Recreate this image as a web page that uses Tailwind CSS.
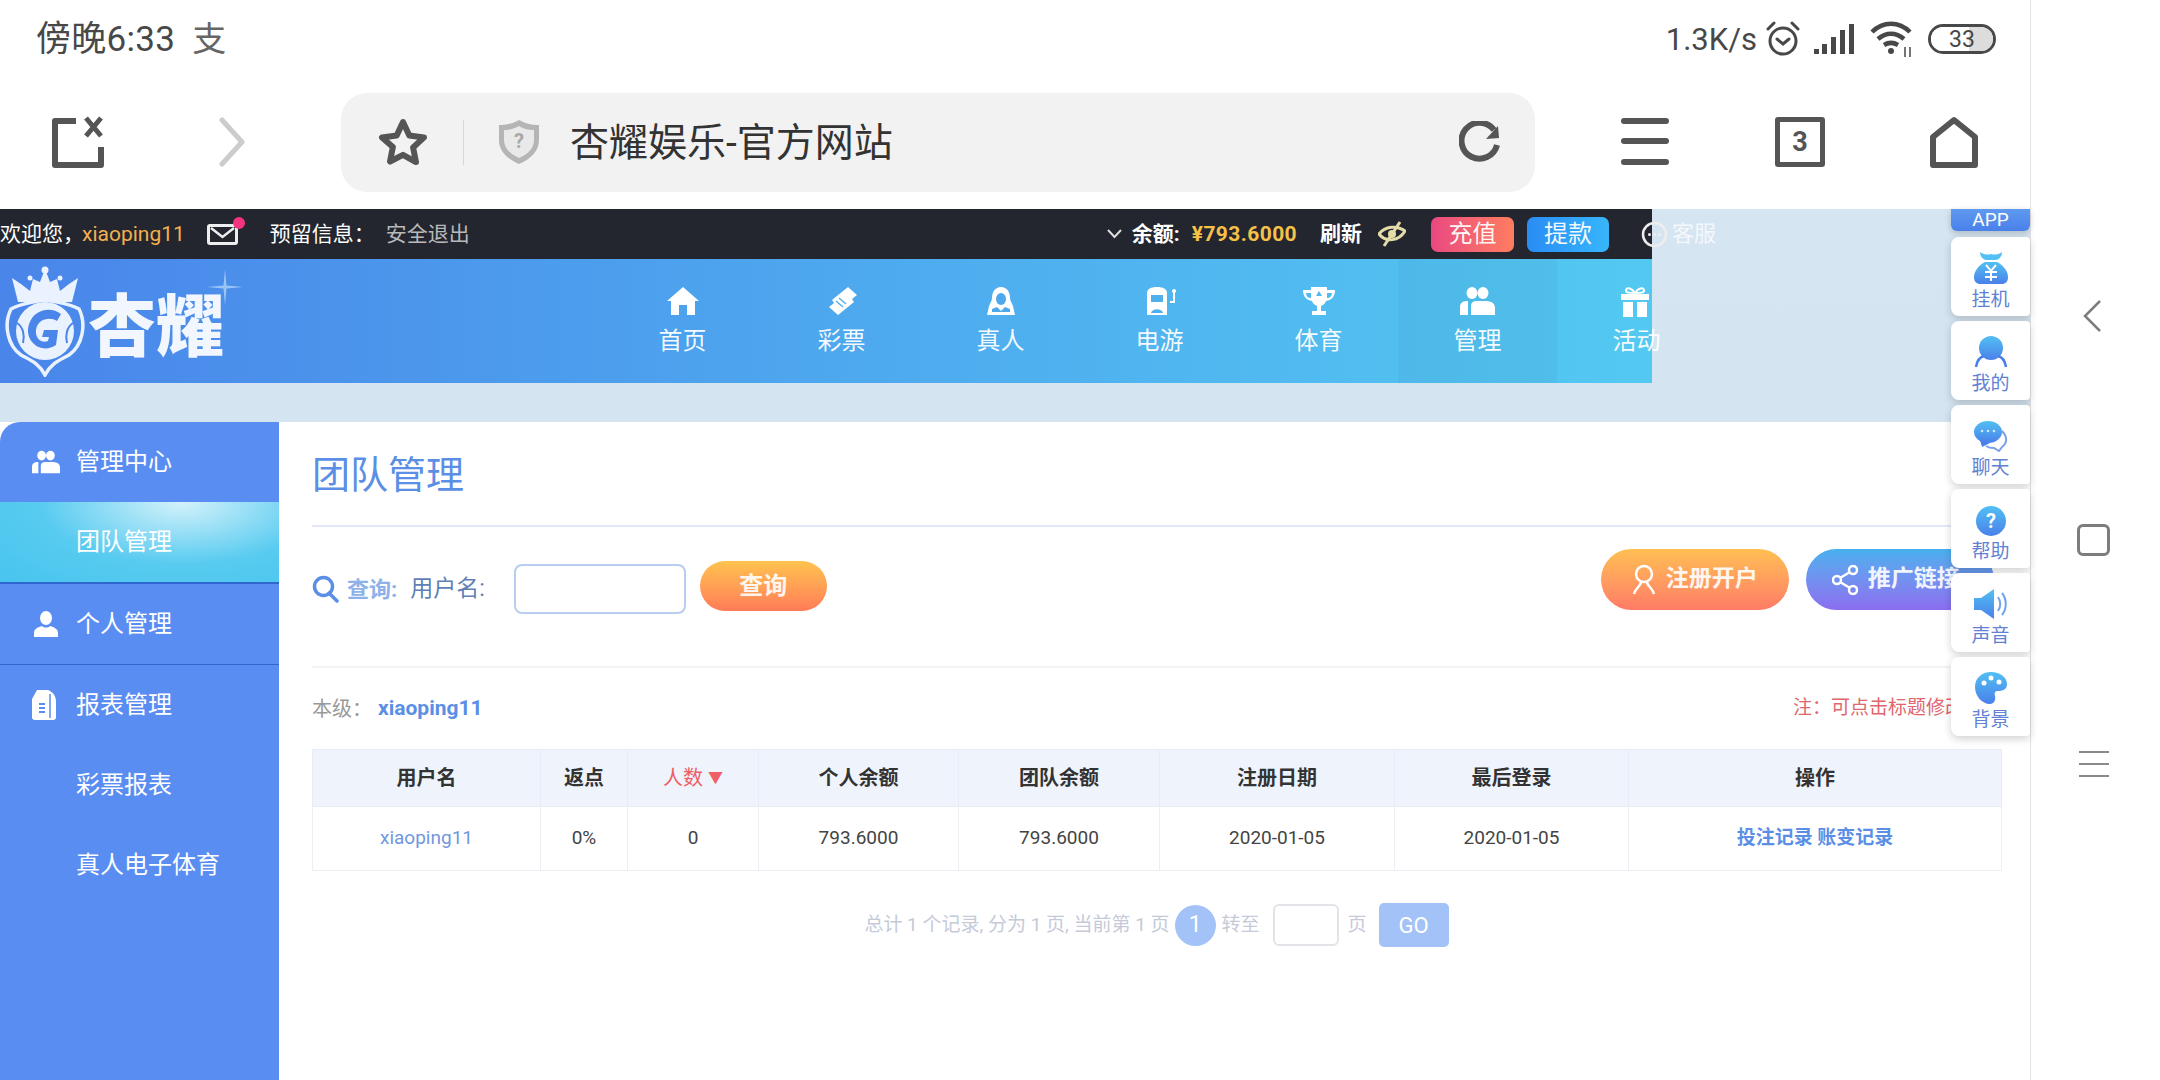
<!DOCTYPE html>
<html lang="zh-CN">
<head>
  <meta charset="utf-8" />
  <title>杏耀娱乐-官方网站</title>
  <script src="https://cdn.jsdelivr.net/npm/@tailwindcss/browser@4"></script>
</head>
<body class="bg-white">
<svg width="0" height="0" class="absolute">
  <defs>
    <linearGradient id="floatBlue" x1="0" y1="0" x2="0" y2="1">
      <stop offset="0" stop-color="#52c0f2" />
      <stop offset="1" stop-color="#4a80ea" />
    </linearGradient>
  </defs>
</svg>

<div class="w-[2160px] h-[1080px] overflow-hidden flex font-['Roboto','Noto_Sans_CJK_SC',sans-serif]">

  <!-- phone screen -->
  <div class="w-[2031px] shrink-0 flex flex-col border-r border-[#e3e3e6]">

    <!-- status bar -->
    <div class="h-[75px] pt-[3px] flex items-center pl-[36px] pr-[34px] text-[#484848]">
      <span class="text-[35px] leading-none tracking-[0.3px]">傍晚6:33</span>
      <span class="ml-[17px] text-[34px] leading-none text-[#666]">支</span>
      <span class="ml-auto text-[31px] leading-none">1.3K/s</span>
      <!-- alarm -->
      <svg class="ml-[9px]" width="34" height="36" viewBox="0 0 34 36" fill="none" stroke="#484848" stroke-width="3">
        <circle cx="17" cy="20" r="13" />
        <path d="M11 18l6 5 6-5M2 8l6-6M32 8l-6-6" stroke-linecap="round" />
      </svg>
      <!-- signal -->
      <svg class="ml-[14px]" width="40" height="32" viewBox="0 0 40 32" fill="#484848">
        <rect x="0" y="26" width="5" height="5" /><rect x="8" y="21" width="5" height="10" /><rect x="17" y="14" width="5" height="17" /><rect x="26" y="7" width="5" height="24" /><rect x="35" y="1" width="5" height="30" />
      </svg>
      <!-- wifi -->
      <svg class="ml-[16px]" width="44" height="38" viewBox="0 0 44 38" fill="none" stroke="#484848" stroke-width="4.5">
        <path d="M2 12C13 1 29 1 40 12M8 19c8-7 18-7 26 0M14 25c5-3 9-3 14 0" />
        <circle cx="21" cy="31" r="3" fill="#484848" stroke="none" />
        <path d="M35 27v10M40 27v10" stroke-width="1.5" />
      </svg>
      <!-- battery -->
      <div class="ml-[14px] w-[68px] h-[30px] rounded-full border-[3px] border-[#484848] relative flex items-center justify-center overflow-hidden">
        <div class="absolute inset-y-0 left-0 w-[62%] bg-white"></div>
        <div class="absolute inset-y-0 right-0 w-[38%] bg-[#dcdcdc]"></div>
        <span class="relative text-[23px] leading-none text-[#484848]">33</span>
      </div>
    </div>

    <!-- browser toolbar -->
    <div class="h-[134px] flex items-center pl-[52px]">
      <svg class="shrink-0" width="54" height="52" viewBox="0 0 54 52" fill="none" stroke="#555" stroke-width="6" stroke-linejoin="round">
        <path d="M24 5H3v44h46V31" />
        <path d="M34 2l15 18M49 2L34 20" stroke-width="5" />
      </svg>
      <svg class="shrink-0 ml-[112px]" width="28" height="50" viewBox="0 0 28 50" fill="none" stroke="#ccc" stroke-width="5" stroke-linecap="round" stroke-linejoin="round">
        <path d="M4 3l20 22L4 47" />
      </svg>

      <div class="ml-[95px] w-[1194px] h-[99px] shrink-0 rounded-[26px] bg-[#f2f2f2] flex items-center pl-[37px] pr-[34px]">
        <svg class="shrink-0" width="50" height="48" viewBox="0 0 50 48" fill="none" stroke="#555" stroke-width="6" stroke-linejoin="round">
          <path d="M25 4l6.3 13.6 14.7 1.8-10.9 10.1 2.9 14.6L25 36.8 12 43.500l2.900-14.600L4 19.400l14.700-1.800z" />
        </svg>
        <div class="ml-[35px] w-[1px] h-[45px] bg-[#d6d6d6] shrink-0"></div>
        <svg class="ml-[34px] shrink-0" width="42" height="46" viewBox="0 0 42 46">
          <path d="M21 1c7 4 13 5 20 5v15c0 11-8 19-20 24C9 40 1 32 1 21V6c7 0 13-1 20-5z" fill="#b5b5b5" />
          <path d="M21 7c5 3 10 4 15 4v10c0 8-6 14-15 18C12 35 6 29 6 21V11c5 0 10-1 15-4z" fill="#e9e9e9" />
          <text x="21" y="29" text-anchor="middle" font-size="20" font-weight="700" fill="#a8a8a8">?</text>
        </svg>
        <span class="ml-[30px] pt-[2px] text-[39px] leading-none text-[#333]">杏耀娱乐-官方网站</span>
        <svg class="ml-auto shrink-0" width="42" height="42" viewBox="0 0 42 42" fill="none" stroke="#555" stroke-width="6">
          <path d="M35 9A18 18 0 1 0 38 24" />
          <path d="M27 18l13-1-1-12z" fill="#555" stroke="none" />
        </svg>
      </div>

      <svg class="ml-[86px] shrink-0" width="48" height="48" viewBox="0 0 48 48" fill="#555">
        <rect x="0" y="0" width="48" height="6" rx="3" /><rect x="0" y="20" width="48" height="6" rx="3" /><rect x="0" y="41" width="48" height="6" rx="3" />
      </svg>
      <div class="ml-[106px] w-[50px] h-[50px] shrink-0 border-[5px] border-[#555] rounded-[3px] flex items-center justify-center text-[27px] font-bold leading-none text-[#555]">3</div>
      <svg class="ml-[105px] shrink-0" width="48" height="52" viewBox="0 0 48 52" fill="none" stroke="#555" stroke-width="6" stroke-linejoin="round">
        <path d="M24 4L45 21v28H3V21z" />
      </svg>
    </div>

    <!-- website -->
    <div class="relative flex-1 flex flex-col bg-linear-to-b from-[#d6e5f2] to-[#d2e1ee]">

      <!-- top info bar -->
      <div class="w-[1652px] h-[50px] shrink-0 bg-[#23262f] flex items-center text-[21px] leading-none text-white whitespace-nowrap">
        <span class="shrink-0">欢迎您&#65292;</span>
        <span class="shrink-0 -ml-[2px] text-[#f2b04e]">xiaoping11</span>
        <div class="relative shrink-0 ml-[22px] w-[31px] h-[21px] border-[3px] border-[#eee] rounded-[3px]">
          <svg class="absolute left-0 top-0" width="25" height="15" viewBox="0 0 25 15" fill="none" stroke="#eee" stroke-width="2.500"><path d="M1 1l11.500 9L24 1" /></svg>
          <div class="absolute -right-[10px] -top-[10px] w-[12px] h-[12px] rounded-full bg-[#f5347f]"></div>
        </div>
        <span class="shrink-0 ml-[32px]">预留信息&#65306;</span>
        <span class="shrink-0 ml-[11px] text-[#b9b9b9]">安全退出</span>

        <svg class="shrink-0 ml-[637px]" width="15" height="10" viewBox="0 0 15 10" fill="none" stroke="#ddd" stroke-width="2"><path d="M1 1l6.500 7L14 1" /></svg>
        <span class="shrink-0 ml-[10px] font-bold">余额:</span>
        <span class="shrink-0 ml-[12px] font-bold text-[#f6c146] tracking-[0.4px]">¥793.6000</span>
        <span class="shrink-0 ml-[23px] font-bold">刷新</span>
        <svg class="shrink-0 ml-[16px]" width="28" height="26" viewBox="0 0 28 26" fill="none" stroke="#e4dca8" stroke-width="3">
          <path d="M1 13C7 5 19 4 27 10 21 20 8 22 1 13z" />
          <circle cx="14" cy="13" r="4" fill="#e4dca8" stroke="none" />
          <path d="M22 1L6 25" />
        </svg>
        <div class="shrink-0 ml-[25px] w-[83px] h-[35px] rounded-[7px] bg-linear-to-r from-[#e9487f] to-[#ff7c5e] flex items-center justify-center text-[24px] text-white/95">充值</div>
        <div class="shrink-0 ml-[13px] w-[82px] h-[35px] rounded-[7px] bg-linear-to-r from-[#2a8cf4] to-[#38b6fb] flex items-center justify-center text-[24px] text-white/95">提款</div>
        <svg class="ml-[32px] shrink-0" width="27" height="27" viewBox="0 0 27 27" fill="none" stroke="#eee" stroke-width="2.500">
          <circle cx="13.500" cy="13.500" r="11.500" />
          <circle cx="8.500" cy="13.500" r="1.500" fill="#eee" stroke="none" /><circle cx="13.500" cy="13.500" r="1.500" fill="#eee" stroke="none" /><circle cx="18.500" cy="13.500" r="1.500" fill="#eee" stroke="none" />
        </svg>
        <span class="ml-[4px] shrink-0 text-[22px] text-white/75">客服</span>
      </div>

      <!-- logo + main nav -->
      <div class="w-[1652px] h-[124px] shrink-0 flex bg-linear-to-r from-[#4a85ea] to-[#53c9f1]">
        <div class="w-[603px] shrink-0 relative flex items-center">
          <svg class="ml-[3px] shrink-0" width="84" height="112" viewBox="0 0 84 112">
            <!-- crown -->
            <path d="M42 4l5 13 7-3 3 12 9-7 9-6-6 24H15L9 13l9 6 9 7 3-12 7 3z" fill="#eaf2ff" />
            <circle cx="42" cy="5" r="3.500" fill="#eaf2ff" /><circle cx="27" cy="13" r="2.500" fill="#eaf2ff" /><circle cx="57" cy="13" r="2.500" fill="#eaf2ff" />
            <!-- shield -->
            <path d="M42 34c12 4 24 4 34 10 8 16 3 37-10 46-9 5-18 8-24 20-6-12-15-15-24-20C5 81 0 60 8 44c10-6 22-6 34-10z" fill="none" stroke="#eaf2ff" stroke-width="3.500" />
            <circle cx="42" cy="66" r="29" fill="#eaf2ff" />
            <path d="M58 49c-11-9-31-4-33 15-1 15 15 25 28 16l2-15H41l-2 7h7l-1 4c-7 3-13-3-12-11 1-11 14-14 21-9z" fill="#4a85ea" />
            <path d="M14 58c6 4 8 12 6 20M70 58c-6 4-8 12-6 20" fill="none" stroke="#4a85ea" stroke-width="2" />
          </svg>
          <span class="ml-[1px] mt-[14px] text-[68px] leading-none font-black text-[#f1f6ff]">杏耀</span>
          <svg class="absolute left-[207px] top-[10px]" width="36" height="36" viewBox="0 0 36 36" fill="#dff0ff">
            <path d="M18 0l1.500 16.500L36 18l-16.500 1.500L18 36l-1.500-16.500L0 18l16.500-1.500z" opacity=".55" />
          </svg>
        </div>

        <div class="w-[159px] shrink-0 flex flex-col items-center pt-[28px]">
          <svg width="32" height="28" viewBox="0 0 32 28" fill="#fff"><path d="M16 0L32 14h-4v14h-8V18h-8v10H4V14H0z" /></svg>
          <span class="mt-[12px] text-[24px] leading-[28px] text-white/95">首页</span>
        </div>
        <div class="w-[159px] shrink-0 flex flex-col items-center pt-[28px]">
          <svg width="32" height="28" viewBox="0 0 32 28" fill="#fff"><path d="M22 0l9 8-5 4 2 3-16 13-9-8 5-4-2-3z" /><path d="M13 11l7 6M10 14l7 6" stroke="#5aaeea" stroke-width="1.500" /></svg>
          <span class="mt-[12px] text-[24px] leading-[28px] text-white/95">彩票</span>
        </div>
        <div class="w-[159px] shrink-0 flex flex-col items-center pt-[28px]">
          <svg width="28" height="28" viewBox="0 0 28 28" fill="#fff"><path d="M14 0c6 0 9 5 9 11 0 3 2 5 3 8l2 9H0l2-9c1-3 3-5 3-8 0-6 3-11 9-11z" /><ellipse cx="14" cy="12" rx="5" ry="6" fill="#4ea8ec" /><path d="M5 22l5-2 4 4 4-4 5 2v3H5z" fill="#4ea8ec" /></svg>
          <span class="mt-[12px] text-[24px] leading-[28px] text-white/95">真人</span>
        </div>
        <div class="w-[159px] shrink-0 flex flex-col items-center pt-[28px]">
          <svg width="32" height="28" viewBox="0 0 32 28" fill="#fff"><path d="M3 6c0-4 4-6 10-6s10 2 10 6v22H3z" /><rect x="7" y="8" width="12" height="7" fill="#4fb0ec" /><path d="M7 26c1-5 11-5 12 0z" fill="#4fb0ec" /><circle cx="30" cy="4" r="2" /><path d="M29 5h2v11h-5v-2h3z" /></svg>
          <span class="mt-[12px] text-[24px] leading-[28px] text-white/95">电游</span>
        </div>
        <div class="w-[159px] shrink-0 flex flex-col items-center pt-[28px]">
          <svg width="32" height="28" viewBox="0 0 32 28" fill="#fff"><path d="M8 0h16v3h8c0 6-3 10-9 11-1 3-3 4-5 5v5h5v4H9v-4h5v-5c-2-1-4-2-5-5C3 13 0 9 0 3h8zM3 6c0 3 2 5 5 5V6zm26 0h-5v5c3 0 5-2 5-5z" /><path d="M16 4l3 5h-6z" fill="#50b8ec" /></svg>
          <span class="mt-[12px] text-[24px] leading-[28px] text-white/95">体育</span>
        </div>
        <div class="w-[159px] shrink-0 flex flex-col items-center pt-[28px] bg-black/3">
          <svg width="35" height="28" viewBox="0 0 35 28" fill="#fff"><ellipse cx="12" cy="6" rx="5.500" ry="6" /><ellipse cx="23" cy="6" rx="5.500" ry="6" /><path d="M0 28v-8c0-4 3-6 7-6h1v14zM11 28V19c0-4 3-5 6-5h7c6 0 11 1 11 7v7z" /></svg>
          <span class="mt-[12px] text-[24px] leading-[28px] text-white/95">管理</span>
        </div>
        <div class="w-[159px] shrink-0 flex flex-col items-center pt-[28px]">
          <svg class="-translate-x-[2px]" width="32" height="30" viewBox="0 0 32 30" fill="#fff"><path d="M2 13V7h28v6zM4 15h10v15H4zM18 15h10v15H18z" /><path d="M16 6c-3-5-8-6-9-3s5 3 9 3c4 0 10 0 9-3s-6-2-9 3z" fill="none" stroke="#fff" stroke-width="2" /></svg>
          <span class="mt-[10px] text-[24px] leading-[28px] text-white/95">活动</span>
        </div>
      </div>

      <div class="h-[39px] shrink-0"></div>

      <!-- sidebar + content -->
      <div class="flex-1 flex bg-white min-h-0">
        <div class="w-[279px] shrink-0 bg-[#5a8df2] rounded-tl-[20px] text-white text-[24px]">
          <div class="h-[80px] flex items-center pl-[32px]">
            <svg class="w-[28px] shrink-0" width="28" height="24" viewBox="0 0 35 28" fill="#fff"><ellipse cx="12" cy="6" rx="5.500" ry="6" /><ellipse cx="23" cy="6" rx="5.500" ry="6" /><path d="M0 28v-8c0-4 3-6 7-6h1v14zM11 28V19c0-4 3-5 6-5h7c6 0 11 1 11 7v7z" /></svg>
            <span class="ml-[16px]">管理中心</span>
          </div>
          <div class="h-[80px] pl-[76px] flex items-center bg-[radial-gradient(ellipse_at_65%_0%,#d4f2fb,#58cbf0_55%,#47c4ee)]">团队管理</div>
          <div class="h-[2px] bg-[#2f66cf]"></div>
          <div class="h-[80px] flex items-center pl-[32px]">
            <svg class="shrink-0" width="28" height="26" viewBox="0 0 28 26" fill="#fff"><ellipse cx="14" cy="7" rx="6" ry="7" /><path d="M2 26v-4c0-4 4-6 8-7 2 2 6 2 8 0 4 1 8 3 8 7v4z" /></svg>
            <span class="ml-[16px]">个人管理</span>
          </div>
          <div class="h-[1px] bg-[#2f66cf]"></div>
          <div class="h-[80px] flex items-center pl-[32px]">
            <svg class="shrink-0" width="24" height="30" viewBox="0 0 24 30" fill="#fff"><path d="M5 0h11c5 2 8 6 8 12v15c0 2-1 3-3 3H3c-2 0-3-1-3-3V9z" /><path d="M7 14h6M7 18h6M7 22h6" stroke="#5a8df2" stroke-width="2" /><path d="M18 4v24" stroke="#5a8df2" stroke-width="1.500" /></svg>
            <span class="ml-[20px]">报表管理</span>
          </div>
          <div class="h-[80px] flex items-center pl-[76px]">彩票报表</div>
          <div class="h-[80px] flex items-center pl-[76px]">真人电子体育</div>
        </div>

        <!-- content -->
        <div class="w-[1722px] shrink-0 pl-[33px]">
          <div class="h-[105px] border-b-2 border-[#e3e8f6] flex items-center pt-[3px]">
            <h1 class="text-[38px] leading-none font-normal text-[#5b8fe6]">团队管理</h1>
          </div>

          <div class="h-[141px] border-b-2 border-[#f2f3f7] flex items-start">
            <div class="flex items-center mt-[37px] h-[50px]">
              <svg class="shrink-0" width="27" height="28" viewBox="0 0 27 28" fill="none" stroke="#5b8fe6" stroke-width="3.500"><circle cx="11.500" cy="11.500" r="9" /><path d="M17 18l8 8" stroke-linecap="round" /></svg>
              <span class="ml-[8px] text-[22px] font-bold text-[#8fb1ea]">查询:</span>
              <span class="ml-[13px] text-[23px] text-[#5f7fb5]">用户名:</span>
              <input class="ml-[29px] w-[172px] h-[50px] rounded-[8px] border-2 border-[#b8cdef] bg-white" />
            </div>
            <div class="ml-[14px] mt-[34px] w-[127px] h-[50px] rounded-full bg-linear-to-b from-[#ffc34e] to-[#ff7b58] flex items-center justify-center text-[24px] font-bold text-white/90">查询</div>
            <div class="ml-[774px] mt-[22px] w-[188px] h-[61px] rounded-full bg-linear-to-b from-[#ffbf52] to-[#ff7b66] flex items-center justify-center text-[23px] font-bold text-white/90">
              <svg class="mr-[10px]" width="24" height="32" viewBox="0 0 24 32" fill="none" stroke="#fff" stroke-width="2.500"><circle cx="12" cy="10" r="8" /><path d="M9 18c0 4-6 6-7 12M15 18c0 4 6 6 7 12" /></svg>
              注册开户
            </div>
            <div class="ml-[17px] mt-[22px] w-[188px] h-[61px] rounded-full bg-linear-to-b from-[#45b0ee] to-[#8a6df0] flex items-center pl-[26px] text-[23px] font-bold text-white/90 shrink-0">
              <svg class="mr-[10px]" width="26" height="30" viewBox="0 0 26 30" fill="none" stroke="#fff" stroke-width="2.500"><circle cx="5" cy="15" r="4" /><circle cx="21" cy="5" r="4" /><circle cx="21" cy="25" r="4" /><path d="M8 13l10-6M8 17l10 6" /></svg>
              推广链接
            </div>
          </div>

          <div class="w-[1689px] h-[81px] flex items-center text-[20px]">
            <span class="text-[#9a9a9a]">本级&#65306;</span>
            <span class="ml-[6px] font-bold text-[#5b8fe6] text-[21px]">xiaoping11</span>
            <span class="ml-auto w-[208px] whitespace-nowrap text-[19px] text-[#e0656c]">注&#65306;可点击标题修改</span>
          </div>

          <table class="w-[1689px] table-fixed border-collapse text-center text-[19px] text-[#444]">
            <colgroup>
              <col class="w-[228px]" /><col class="w-[87px]" /><col class="w-[131px]" /><col class="w-[200px]" /><col class="w-[201px]" /><col class="w-[235px]" /><col class="w-[234px]" /><col class="w-[373px]" />
            </colgroup>
            <thead>
              <tr class="h-[57px] bg-[#eff3fc] text-[20px] text-[#333]">
                <th class="border border-[#e8ecf6]">用户名</th>
                <th class="border border-[#e8ecf6]">返点</th>
                <th class="border border-[#e8ecf6] text-[#ee5f66] font-normal">人数 <span class="text-[15px] align-[2px]">▼</span></th>
                <th class="border border-[#e8ecf6]">个人余额</th>
                <th class="border border-[#e8ecf6]">团队余额</th>
                <th class="border border-[#e8ecf6]">注册日期</th>
                <th class="border border-[#e8ecf6]">最后登录</th>
                <th class="border border-[#e8ecf6]">操作</th>
              </tr>
            </thead>
            <tbody>
              <tr class="h-[64px]">
                <td class="border border-[#eceef3] text-[#6f97e0]">xiaoping11</td>
                <td class="border border-[#eceef3]">0%</td>
                <td class="border border-[#eceef3]">0</td>
                <td class="border border-[#eceef3]">793.6000</td>
                <td class="border border-[#eceef3]">793.6000</td>
                <td class="border border-[#eceef3]">2020-01-05</td>
                <td class="border border-[#eceef3]">2020-01-05</td>
                <td class="border border-[#eceef3] font-bold text-[#5b8fe6]">投注记录 账变记录</td>
              </tr>
            </tbody>
          </table>

          <div class="w-[1689px] mt-[32px] flex items-center justify-center text-[19px] text-[#c5cad9]">
            <span>总计 1 个记录, 分为 1 页, 当前第 1 页</span>
            <div class="ml-[5px] w-[41px] h-[41px] rounded-full bg-[#a3c2f7] flex items-center justify-center text-[23px] text-white">1</div>
            <span class="ml-[6px]">转至</span>
            <div class="ml-[13px] w-[66px] h-[42px] rounded-[6px] border-2 border-[#e2e4ea]"></div>
            <span class="ml-[9px]">页</span>
            <div class="ml-[12px] w-[70px] h-[44px] rounded-[5px] bg-[#a3c2f7] flex items-center justify-center text-[22px] text-white">GO</div>
          </div>
        </div>
      </div>

      <!-- floating side tools, lies over the page -->
      <div class="absolute top-0 left-[1951px] w-[79px] flex flex-col gap-[5px] text-[19px] leading-[24px] text-[#5f82d4]">
        <div class="h-[22px] mb-[1px] rounded-b-[6px] bg-linear-to-b from-[#5f9af0] to-[#4a80ea] flex items-center justify-center text-white overflow-hidden shadow-[0_2px_6px_rgba(0,0,0,.2)]">APP</div>
        <div class="h-[79px] rounded-l-[8px] rounded-r-[4px] bg-white shadow-[0_3px_8px_rgba(0,0,0,.18)] flex flex-col items-center pt-[15px]">
          <svg width="34" height="32" viewBox="0 0 34 32"><path d="M6 0c4 3 8 3 11 2 3 1 7 1 11-2 0 4-2 7-6 8h-10C8 7 6 4 6 0z" fill="#52c0f2" /><path d="M11 10h12c6 3 11 9 11 15 0 5-3 7-6 7H6c-3 0-6-2-6-7 0-6 5-12 11-15z" fill="url(#floatBlue)" /><path d="M12 13l5 6 5-6M11 20h12M11 25h12M17 19v10" stroke="#fff" stroke-width="2" fill="none" /></svg>
          <span class="mt-[4px]">挂机</span>
        </div>
        <div class="h-[79px] rounded-l-[8px] rounded-r-[4px] bg-white shadow-[0_3px_8px_rgba(0,0,0,.18)] flex flex-col items-center pt-[15px]">
          <svg width="34" height="32" viewBox="0 0 34 32"><ellipse cx="17" cy="12" rx="12" ry="12" fill="url(#floatBlue)" /><path d="M2 31c1-7 4-10 8-11M32 31c-1-7-4-10-8-11" fill="none" stroke="#4a80ea" stroke-width="2.500" /></svg>
          <span class="mt-[4px]">我的</span>
        </div>
        <div class="h-[79px] rounded-l-[8px] rounded-r-[4px] bg-white shadow-[0_3px_8px_rgba(0,0,0,.18)] flex flex-col items-center pt-[15px]">
          <svg width="34" height="32" viewBox="0 0 34 32"><path d="M28 11c5 5 6 12 0 16l-3 4-5-3c-3 0-5 0-8-2" fill="none" stroke="#7ba0e8" stroke-width="2" /><ellipse cx="14" cy="12" rx="14" ry="11" fill="url(#floatBlue)" /><path d="M6 20l2 7 8-4z" fill="#4a80ea" /><circle cx="8" cy="11" r="1.300" fill="#cfe6ff" /><circle cx="14" cy="11" r="1.300" fill="#cfe6ff" /><circle cx="20" cy="11" r="1.300" fill="#cfe6ff" /></svg>
          <span class="mt-[4px]">聊天</span>
        </div>
        <div class="h-[79px] rounded-l-[8px] rounded-r-[4px] bg-white shadow-[0_3px_8px_rgba(0,0,0,.18)] flex flex-col items-center pt-[17px]">
          <svg width="30" height="30" viewBox="0 0 30 30"><circle cx="15" cy="15" r="15" fill="url(#floatBlue)" /><text x="15" y="22" text-anchor="middle" font-size="20" font-weight="700" fill="#fff">?</text></svg>
          <span class="mt-[4px]">帮助</span>
        </div>
        <div class="h-[79px] rounded-l-[8px] rounded-r-[4px] bg-white shadow-[0_3px_8px_rgba(0,0,0,.18)] flex flex-col items-center pt-[15px]">
          <svg width="34" height="32" viewBox="0 0 34 32"><path d="M0 10h7L20 1v30L7 22H0z" fill="url(#floatBlue)" /><path d="M24 9c3 4 3 10 0 14M28 5c5 6 5 16 0 22" fill="none" stroke="#6ea3ee" stroke-width="2" /></svg>
          <span class="mt-[4px]">声音</span>
        </div>
        <div class="h-[79px] rounded-l-[8px] rounded-r-[4px] bg-white shadow-[0_3px_8px_rgba(0,0,0,.18)] flex flex-col items-center pt-[15px]">
          <svg width="32" height="32" viewBox="0 0 32 32"><path d="M16 0c9 0 16 5 16 12 0 6-5 7-9 7-3 0-4 2-3 5 1 4-1 8-5 8C7 32 0 24 0 15 0 6 7 0 16 0z" fill="url(#floatBlue)" /><circle cx="9" cy="11" r="2.500" fill="#fff" /><circle cx="16" cy="6" r="2.500" fill="#fff" /><circle cx="24" cy="10" r="2.500" fill="#fff" /></svg>
          <span class="mt-[4px]">背景</span>
        </div>
      </div>
    </div>
  </div>

  <!-- android nav keys -->
  <div class="flex-1 flex flex-col items-center">
    <svg class="mt-[299px] -ml-[8px]" width="20" height="34" viewBox="0 0 20 34" fill="none" stroke="#7d7d7d" stroke-width="2.500"><path d="M18 2L3 17l15 15" /></svg>
    <div class="mt-[191px] -ml-[4px] w-[33px] h-[32px] rounded-[6px] border-[3px] border-[#7d7d7d]"></div>
    <div class="mt-[195px] -ml-[4px] w-[30px] flex flex-col gap-[10px]">
      <div class="h-[2px] bg-[#8a8a8a]"></div>
      <div class="h-[2px] bg-[#8a8a8a]"></div>
      <div class="h-[2px] bg-[#8a8a8a]"></div>
    </div>
  </div>
</div>
</body>
</html>
